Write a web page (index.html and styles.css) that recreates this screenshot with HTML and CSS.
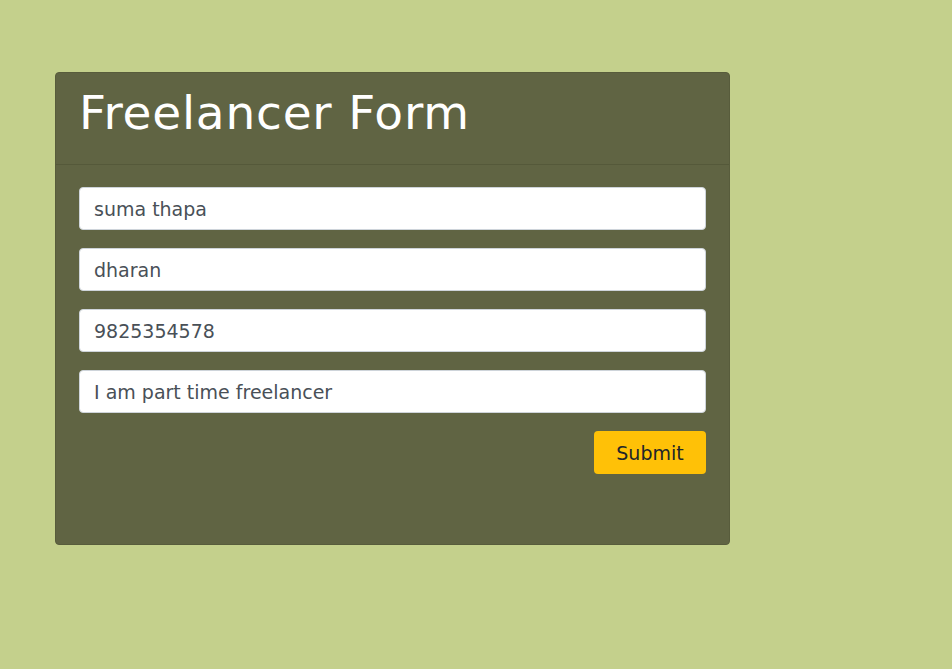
FILE: index.html
```html
<!DOCTYPE html>
<html>
<head>
<meta charset="utf-8">
<link rel="stylesheet" href="styles.css">
</head>
<body>
<div class="page">
  <div class="card">
    <div class="card-header"><h1 class="title">Freelancer Form</h1></div>
    <form class="card-body">
      <input class="field" type="text" value="suma thapa">
      <input class="field" type="text" value="dharan">
      <input class="field" type="text" value="9825354578">
      <input class="field" type="text" value="I am part time freelancer">
      <div class="actions"><button type="button" class="btn">Submit</button></div>
    </form>
  </div>
</div>
</body>
</html>
```
FILE: styles.css
```css
html, body { margin: 0; padding: 0; }
body {
  background: #c4d08c;
  font-family: "DejaVu Sans", "Liberation Sans", sans-serif;
  width: 952px;
  height: 669px;
  overflow: hidden;
}
.page { padding: 72px 0 0 55px; }
.card {
  width: 675px;
  height: 473px;
  box-sizing: border-box;
  background: #606443;
  border: 1px solid #585c3c;
  border-radius: 4px;
}
.card-header {
  height: 92px;
  box-sizing: border-box;
  border-bottom: 1px solid #55593a;
  padding: 0 23px 12px;
  display: flex;
  align-items: center;
}
.title {
  margin: 0;
  color: #fff;
  font-weight: 400;
  font-size: 47px;
  line-height: 1;
  letter-spacing: 0.8px;
}
.card-body {
  padding: 22px 23px;
  display: flex;
  flex-direction: column;
  gap: 18px;
}
.field {
  height: 43px;
  box-sizing: border-box;
  border: 1px solid #ced4da;
  border-radius: 4px;
  background: #fff;
  padding: 0 14px;
  font-family: inherit;
  font-size: 19px;
  color: #495057;
  outline: none;
  width: 100%;
}
.actions { display: flex; justify-content: flex-end; }
.btn {
  width: 112px;
  height: 43px;
  border: none;
  border-radius: 4px;
  background: #ffc107;
  color: #212529;
  font-family: inherit;
  font-size: 19px;
  cursor: pointer;
}
```
